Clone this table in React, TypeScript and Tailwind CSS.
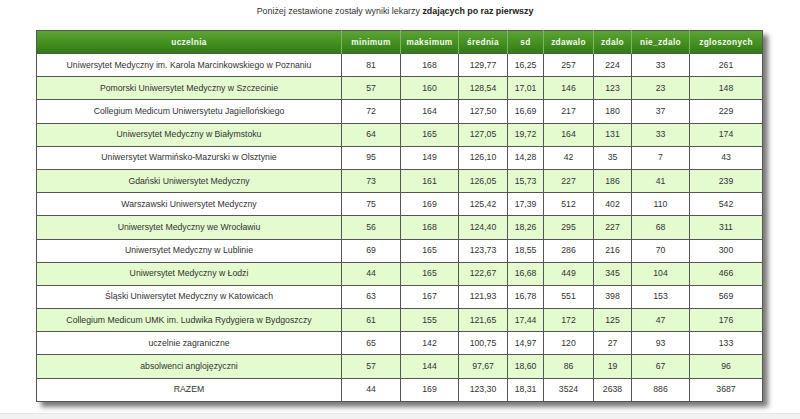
import React from "react";

const rows: (string | number)[][] = [
  ["Uniwersytet Medyczny im. Karola Marcinkowskiego w Poznaniu", 81, 168, "129,77", "16,25", 257, 224, 33, 261],
  ["Pomorski Uniwersytet Medyczny w Szczecinie", 57, 160, "128,54", "17,01", 146, 123, 23, 148],
  ["Collegium Medicum Uniwersytetu Jagiellońskiego", 72, 164, "127,50", "16,69", 217, 180, 37, 229],
  ["Uniwersytet Medyczny w Białymstoku", 64, 165, "127,05", "19,72", 164, 131, 33, 174],
  ["Uniwersytet Warmińsko-Mazurski w Olsztynie", 95, 149, "126,10", "14,28", 42, 35, 7, 43],
  ["Gdański Uniwersytet Medyczny", 73, 161, "126,05", "15,73", 227, 186, 41, 239],
  ["Warszawski Uniwersytet Medyczny", 75, 169, "125,42", "17,39", 512, 402, 110, 542],
  ["Uniwersytet Medyczny we Wrocławiu", 56, 168, "124,40", "18,26", 295, 227, 68, 311],
  ["Uniwersytet Medyczny w Lublinie", 69, 165, "123,73", "18,55", 286, 216, 70, 300],
  ["Uniwersytet Medyczny w Łodzi", 44, 165, "122,67", "16,68", 449, 345, 104, 466],
  ["Śląski Uniwersytet Medyczny w Katowicach", 63, 167, "121,93", "16,78", 551, 398, 153, 569],
  ["Collegium Medicum UMK im. Ludwika Rydygiera w Bydgoszczy", 61, 155, "121,65", "17,44", 172, 125, 47, 176],
  ["uczelnie zagraniczne", 65, 142, "100,75", "14,97", 120, 27, 93, 133],
  ["absolwenci anglojęzyczni", 57, 144, "97,67", "18,60", 86, 19, 67, 96],
  ["RAZEM", 44, 169, "123,30", "18,31", 3524, 2638, 886, 3687],
];

const columns = [
  { name: "uczelnia", w: "w-[305px]" },
  { name: "minimum", w: "w-[59px]" },
  { name: "maksimum", w: "w-[58px]" },
  { name: "średnia", w: "w-[49px]" },
  { name: "sd", w: "w-[36px]" },
  { name: "zdawalo", w: "w-[50px]" },
  { name: "zdalo", w: "w-[38px]" },
  { name: "nie_zdalo", w: "w-[58px]" },
  { name: "zgloszonych", w: "w-[73px]" },
];

export default function App() {
  return (
    <div className="w-[800px] h-[419px] bg-white flex flex-col font-['Liberation_Sans',Arial,sans-serif] text-[#333]">
      <p className="pt-[5px] h-[30px] text-center text-[8.9px] leading-[12px] pr-[10px]">
        Poniżej zestawione zostały wyniki lekarzy <b className="text-[#222]">zdających po raz pierwszy</b>
      </p>
      <div className="px-[36px]">
        <table className="w-[726px] table-fixed border-collapse border border-[#555] shadow-[5px_5px_5px_#7a7a7a]">
          <thead>
            <tr className="h-[23px] bg-gradient-to-b from-[#5ba533] to-[#2f7b11]">
              {columns.map((c) => (
                <th
                  key={c.name}
                  className={`${c.w} p-0 text-center text-[8.3px] font-bold text-[#f4fbef] tracking-[0.35px] border-l border-[#7fb662] first:border-l-0`}
                >
                  {c.name}
                </th>
              ))}
            </tr>
          </thead>
          <tbody>
            {rows.map((r, i) => (
              <tr key={i} className={`h-[23.2px] ${i % 2 === 1 ? "bg-[#e4fbcf]" : "bg-white"}`}>
                {r.map((v, j) => (
                  <td key={j} className="p-0 text-center text-[8.7px] border border-[#555]">
                    {v}
                  </td>
                ))}
              </tr>
            ))}
          </tbody>
        </table>
      </div>
      <div className="mt-auto h-[6px] bg-[#f2f2f2] border-t border-[#e8e8e8]" />
    </div>
  );
}
